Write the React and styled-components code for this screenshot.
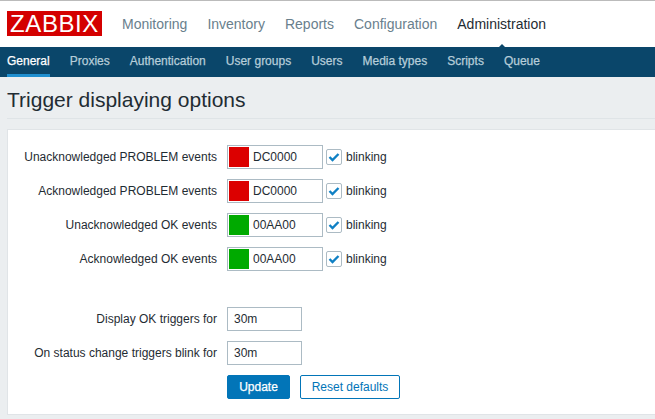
import React from 'react';
import styled, { createGlobalStyle } from 'styled-components';

const mainMenu = ['Monitoring', 'Inventory', 'Reports', 'Configuration', 'Administration'];
const subMenu = ['General', 'Proxies', 'Authentication', 'User groups', 'Users', 'Media types', 'Scripts', 'Queue'];
const colorRows = [
  { label: 'Unacknowledged PROBLEM events', color: '#DC0000', value: 'DC0000' },
  { label: 'Acknowledged PROBLEM events', color: '#DC0000', value: 'DC0000' },
  { label: 'Unacknowledged OK events', color: '#00AA00', value: '00AA00' },
  { label: 'Acknowledged OK events', color: '#00AA00', value: '00AA00' },
];

const App = () => (
  <>
    <GlobalStyle />
    <TopBar>
      <Logo>ZABBIX</Logo>
      <MainNav>
        {mainMenu.map((item) => (
          <MainItem key={item} $active={item === 'Administration'}>{item}</MainItem>
        ))}
      </MainNav>
    </TopBar>
    <SubNav>
      {subMenu.map((item) => (
        <SubItem key={item} $active={item === 'General'}>{item}</SubItem>
      ))}
    </SubNav>
    <Content>
      <Title>Trigger displaying options</Title>
      <Card>
        {colorRows.map((row) => (
          <Row key={row.label}>
            <Label>{row.label}</Label>
            <ColorField>
              <Swatch $color={row.color} />
              {row.value}
            </ColorField>
            <Checkbox>
              <svg width="12" height="10" viewBox="0 0 12 10">
                <path d="M1.5 5 L4.5 8 L10.5 2" fill="none" stroke="#0f80c4" strokeWidth="2.4" />
              </svg>
            </Checkbox>
            <CheckLabel>blinking</CheckLabel>
          </Row>
        ))}
        <Spacer />
        <Row>
          <Label>Display OK triggers for</Label>
          <TextField>30m</TextField>
        </Row>
        <Row>
          <Label>On status change triggers blink for</Label>
          <TextField>30m</TextField>
        </Row>
        <Buttons>
          <PrimaryButton>Update</PrimaryButton>
          <OutlineButton>Reset defaults</OutlineButton>
        </Buttons>
      </Card>
    </Content>
  </>
);

export default App;

const GlobalStyle = createGlobalStyle`
  html, body {
    margin: 0;
    height: 100%;
    overflow: hidden;
    background-color: #ebeef0;
    font-family: "Liberation Sans", Arial, sans-serif;
    color: #1f2c33;
  }
`;

const TopBar = styled.div`
  display: flex;
  align-items: center;
  height: 46px;
  padding-left: 7px;
  background-color: #fff;
  border-top: 1px solid #bbb;
`;

const Logo = styled.div`
  width: 95px;
  height: 25px;
  margin-top: -1px;
  background-color: #d40000;
  color: #fff;
  font-size: 24px;
  line-height: 25px;
  text-align: center;
  letter-spacing: 0.6px;
`;

const MainNav = styled.div`
  display: flex;
  gap: 20px;
  margin-left: 20px;
`;

const MainItem = styled.div`
  position: relative;
  font-size: 14px;
  line-height: 24px;
  color: ${(p) => (p.$active ? '#1f2c33' : '#69808d')};

  ${(p) => p.$active && `
    &::after {
      content: '';
      position: absolute;
      left: 37px;
      bottom: -16px;
      border-left: 8px solid transparent;
      border-right: 8px solid transparent;
      border-bottom: 8px solid #0a466a;
    }
  `}
`;

const SubNav = styled.div`
  display: flex;
  gap: 20px;
  height: 30px;
  padding-left: 7px;
  background-color: #0a466a;
`;

const SubItem = styled.div`
  height: 30px;
  box-sizing: border-box;
  font-size: 12px;
  line-height: 29px;
  -webkit-text-stroke: 0.25px currentColor;
  color: ${(p) => (p.$active ? '#fff' : '#b6cdd9')};
  border-bottom: 3px solid ${(p) => (p.$active ? '#1f8fd0' : 'transparent')};
`;

const Content = styled.div`
  padding: 0 0 0 8px;
`;

const Title = styled.h1`
  height: 41px;
  margin: 0 0 10px -1px;
  border-bottom: 1px solid #dfe4e7;
  font-size: 21px;
  font-weight: 400;
  line-height: 46px;
  color: #1f2c33;
`;

const Card = styled.div`
  display: flex;
  flex-direction: column;
  gap: 10px;
  height: 286px;
  box-sizing: border-box;
  margin-left: -1px;
  padding-top: 15px;
  background-color: #fff;
  border: 1px solid #e0e4e7;
  border-right: none;
`;

const Row = styled.div`
  display: flex;
  align-items: center;
  height: 24px;
`;

const Spacer = styled.div`
  height: 16px;
`;

const Label = styled.div`
  width: 209px;
  margin-right: 10px;
  font-size: 12px;
  text-align: right;
  color: #1f2c33;
`;

const TextField = styled.div`
  display: flex;
  align-items: center;
  width: 75px;
  height: 24px;
  box-sizing: border-box;
  padding-left: 6px;
  background-color: #fff;
  border: 1px solid #acbbc4;
  font-size: 12px;
  color: #1f2c33;
`;

const ColorField = styled(TextField)`
  width: 96px;
  padding-left: 1px;
`;

const Swatch = styled.span`
  width: 20px;
  height: 20px;
  margin-right: 4px;
  background-color: ${(p) => p.$color};
`;

const Checkbox = styled.span`
  display: flex;
  align-items: center;
  justify-content: center;
  width: 16px;
  height: 16px;
  box-sizing: border-box;
  margin-left: 3px;
  background-color: #fff;
  border: 1px solid #acbbc4;
  border-radius: 2px;
`;

const CheckLabel = styled.span`
  margin-left: 4px;
  font-size: 12px;
  color: #1f2c33;
`;

const Buttons = styled.div`
  display: flex;
  gap: 10px;
  margin-left: 219px;
`;

const PrimaryButton = styled.button`
  width: 63px;
  height: 24px;
  padding: 0;
  background-color: #0275b8;
  border: 1px solid #0275b8;
  border-radius: 2px;
  color: #fff;
  font-family: inherit;
  font-size: 12px;
  -webkit-text-stroke: 0.25px currentColor;
`;

const OutlineButton = styled(PrimaryButton)`
  width: 100px;
  background-color: #fff;
  color: #0275b8;
  -webkit-text-stroke: 0;
`;
